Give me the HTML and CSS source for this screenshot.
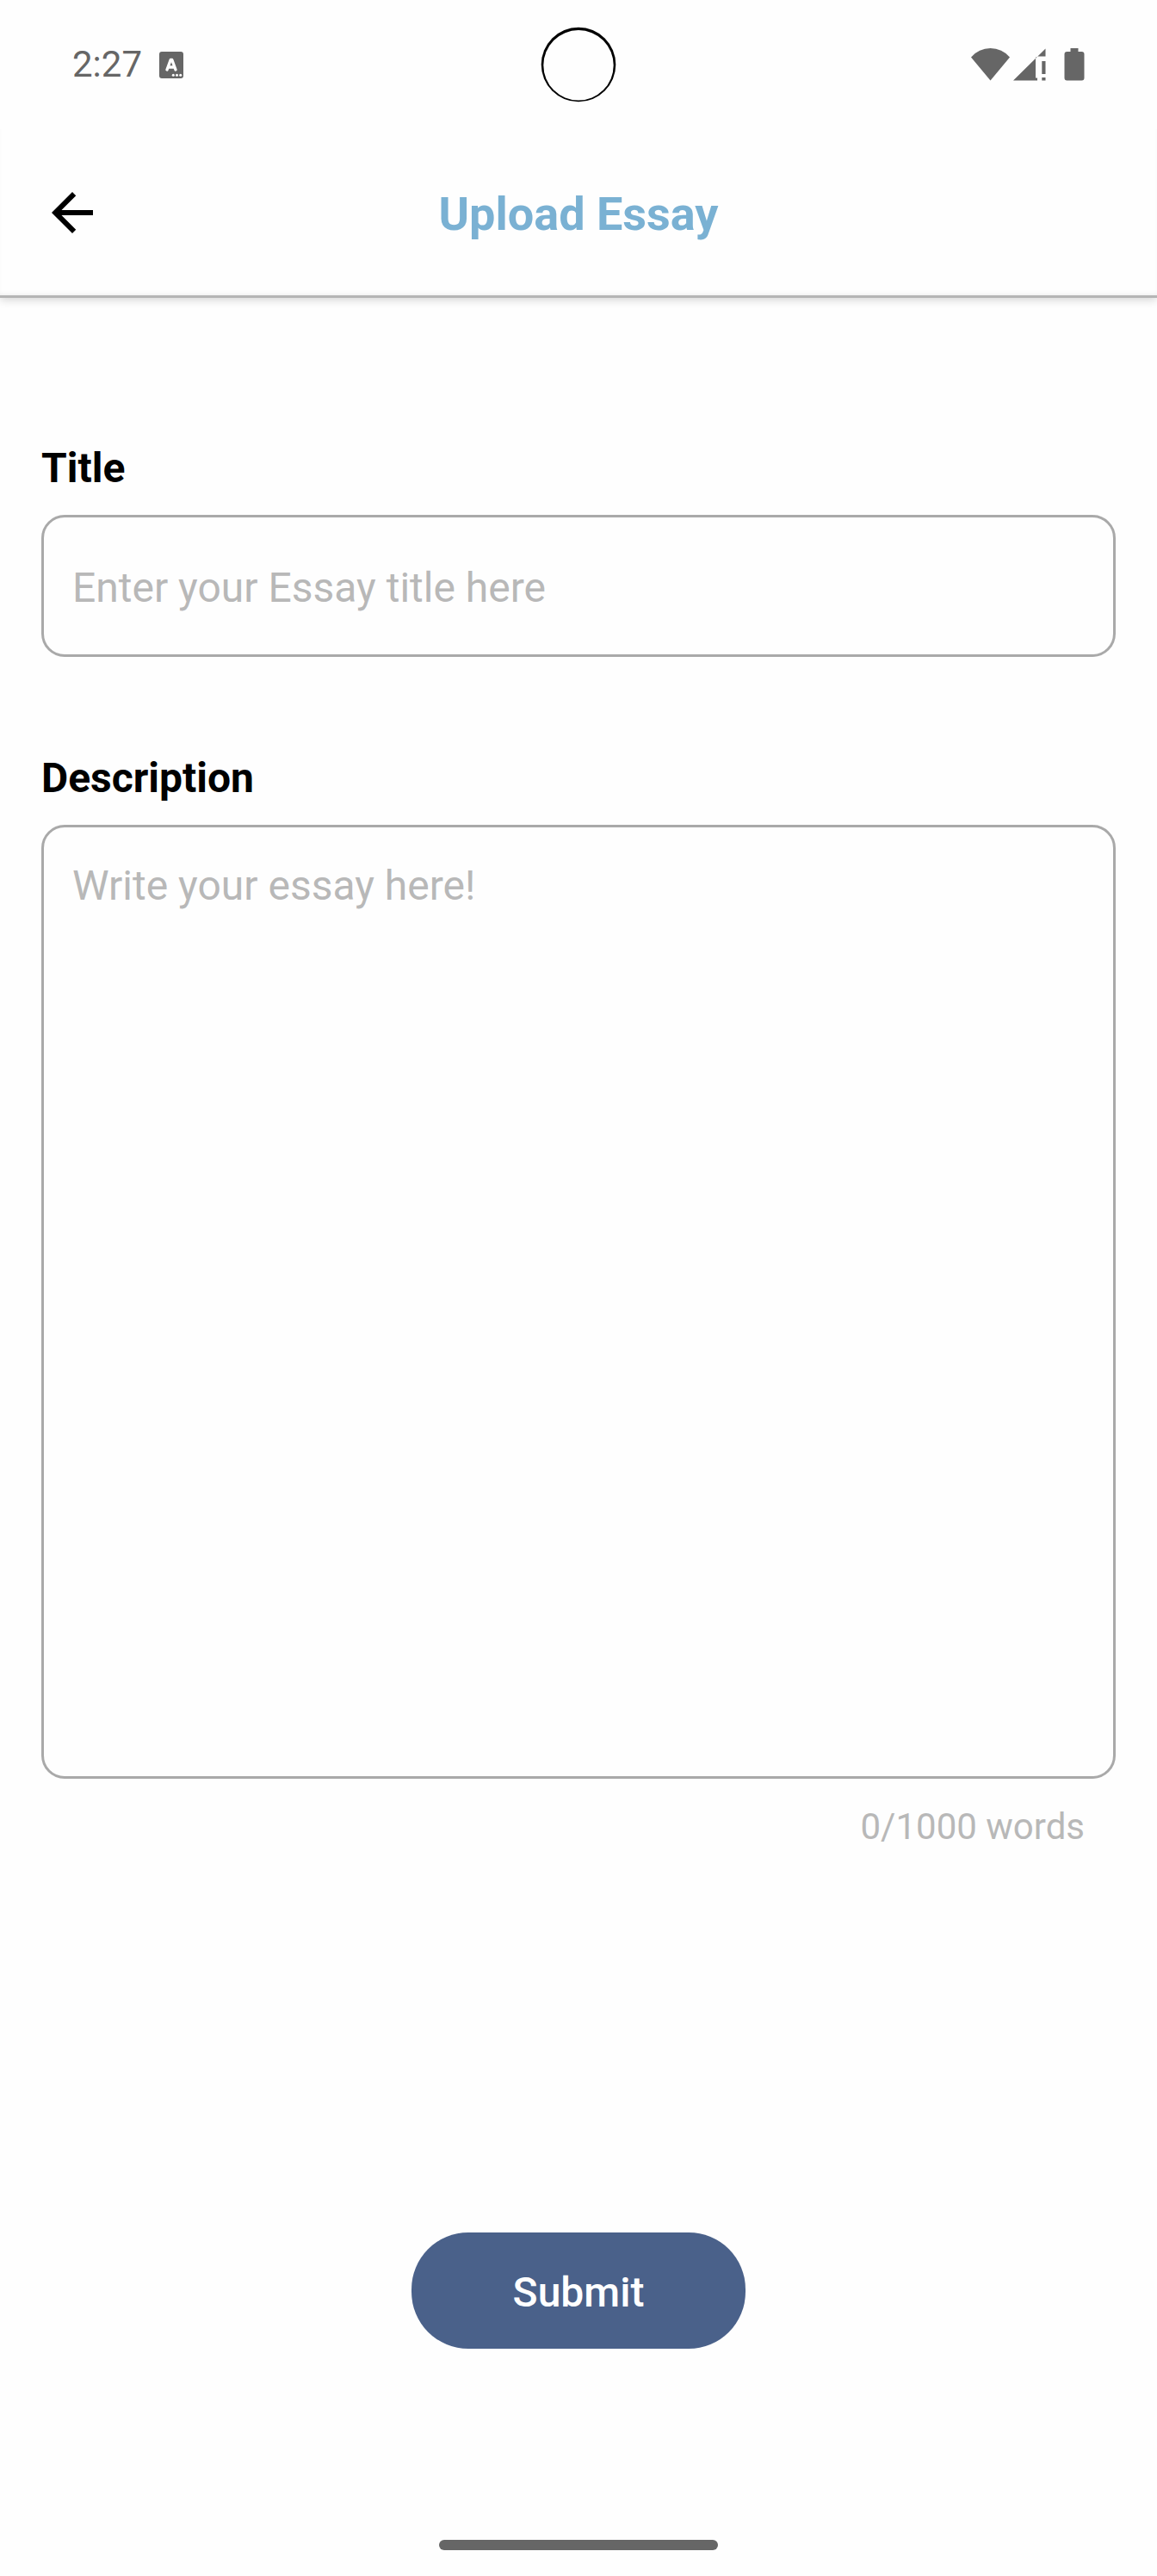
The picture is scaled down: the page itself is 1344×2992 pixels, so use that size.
FILE: index.html
```html
<!DOCTYPE html>
<html lang="en">
<head>
<meta charset="utf-8">
<meta name="viewport" content="width=device-width, initial-scale=1">
<title>Upload Essay</title>
<link rel="stylesheet" href="styles.css">
</head>
<body>
<div class="status-bar">
  <div class="status-left">
    <span class="clock">2:27</span>
    <svg class="icon-app" viewBox="0 0 28 31" aria-hidden="true">
      <rect width="28" height="31" rx="3" fill="#666"/>
      <path d="M9 21 13.200 9.500h1.600L19 21M10.500 18h7" fill="none" stroke="#fefefe" stroke-width="3.400" stroke-linecap="round" stroke-linejoin="round"/>
      <g fill="#fefefe"><circle cx="16.300" cy="27.300" r="1.500"/><circle cx="20.500" cy="27.300" r="1.500"/><circle cx="24.700" cy="27.300" r="1.500"/></g>
    </svg>
  </div>
  <svg class="camera" viewBox="0 0 88 88" aria-hidden="true">
    <circle cx="44" cy="44" r="43.300" fill="#000"/>
    <circle cx="44" cy="44.800" r="40.700" fill="#fefefe"/>
  </svg>
  <div class="status-right">
    <svg class="icon-signal" viewBox="0 0 132 38" aria-hidden="true">
      <g fill="#666">
        <path d="M0 10.500Q9 0 22.500 0T45 10.500L22.500 37.500Z"/>
        <path d="M86.500 .500V9.500H77V10.500H75V34.500H77V37.500H49Z"/>
        <path d="M82.300 15h4.200v15h-4.200zM82.300 34h4.200v3.500h-4.200z"/>
        <path d="M115.500 0h9v4h4a3 3 0 0 1 3 3v27.500a3 3 0 0 1-3 3h-17a3 3 0 0 1-3-3V7a3 3 0 0 1 3-3h4z"/>
      </g>
    </svg>
  </div>
</div>
<header class="app-bar">
  <button class="back" type="button" aria-label="Back">
    <svg viewBox="0 0 24 24" aria-hidden="true"><path d="M20 11H7.830l5.590-5.590L12 4l-8 8 8 8 1.410-1.410L7.830 13H20z"/></svg>
  </button>
  <h1 class="app-title">Upload Essay</h1>
</header>
<main class="content">
  <form class="essay-form">
    <div class="field">
      <label class="label" for="title">Title</label>
      <input class="control" id="title" type="text" placeholder="Enter your Essay title here">
    </div>
    <div class="field field-grow">
      <label class="label" for="description">Description</label>
      <textarea class="control control-area" id="description" placeholder="Write your essay here!"></textarea>
      <p class="counter">0/1000 words</p>
    </div>
    <button class="submit" type="submit">Submit</button>
  </form>
</main>
<div class="home-bar"></div>
</body>
</html>
```
FILE: styles.css
```css
*, *::before, *::after {
  box-sizing: border-box;
}

body {
  margin: 0;
  min-height: 100vh;
  display: flex;
  flex-direction: column;
  background: #fefefe;
  color: #000;
  font-family: Roboto, "Liberation Sans", sans-serif;
  font-size: 48px;
  line-height: 56px;
}

svg {
  display: block;
}

.status-bar {
  display: grid;
  grid-template-columns: 1fr 88px 1fr;
  align-items: center;
  height: 150px;
  padding: 0 84px;
}

.status-left {
  display: flex;
  align-items: center;
  gap: 20px;
}

.clock {
  color: #666;
  font-size: 42px;
  line-height: 48px;
}

.icon-app {
  width: 28px;
  height: 31px;
}

.camera {
  width: 88px;
  height: 88px;
}

.status-right {
  display: flex;
  justify-content: flex-end;
}

.icon-signal {
  width: 132px;
  height: 38px;
}

.app-bar {
  display: grid;
  grid-template-columns: 72px 1fr 72px;
  align-items: center;
  height: 196px;
  padding: 0 48px;
  border-bottom: 3px solid #b5b5b5;
  box-shadow: 0 2px 10px rgba(0, 0, 0, 0.18), inset 0 -4px 6px -4px rgba(0, 0, 0, 0.1);
  clip-path: inset(0 0 -20px);
}

.back {
  width: 72px;
  height: 72px;
  padding: 0;
  border: 0;
  background: none;
}

.app-title {
  margin: 0;
  padding-top: 4px;
  color: #7ab1d3;
  font-size: 54px;
  line-height: 64px;
  font-weight: 700;
  text-align: center;
}

.content,
.essay-form,
.field-grow {
  flex: 1;
  display: flex;
  flex-direction: column;
}

.content {
  padding: 170px 48px 222px;
}

.essay-form {
  gap: 113px;
}

.label {
  display: block;
  margin-bottom: 26px;
  font-weight: 700;
}

.control {
  display: block;
  width: 100%;
  height: 165px;
  padding: 4px 33px 0;
  border: 3px solid #a9a9a9;
  border-radius: 27px;
  background: transparent;
  color: #000;
  font: inherit;
}

.control::placeholder {
  color: #b8b8b8;
  opacity: 1;
}

.control-area {
  flex: 1;
  min-height: 400px;
  padding: 40px 33px;
  resize: none;
}

.counter {
  margin: 32px 36px 0;
  color: #b8b8b8;
  font-size: 42px;
  line-height: 48px;
  text-align: right;
}

.submit {
  align-self: center;
  width: 388px;
  height: 135px;
  margin-top: 334px;
  padding: 4px 0 0;
  border: 0;
  border-radius: 66px;
  background: #4a618a;
  color: #fff;
  font: inherit;
  font-weight: 500;
}

.home-bar {
  align-self: center;
  width: 324px;
  height: 12px;
  margin-bottom: 30px;
  border-radius: 6px;
  background: #666;
}
```
